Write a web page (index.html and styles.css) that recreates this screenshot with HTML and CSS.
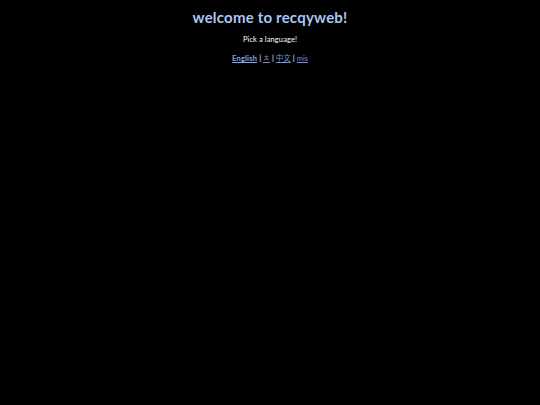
FILE: index.html
```html
<!DOCTYPE html>
<html>
<head>
<meta charset="utf-8">
<link rel="stylesheet" href="styles.css">
</head>
<body>
<main class="page">
  <h1 class="title">welcome to recqyweb!</h1>
  <p class="prompt">Pick a language!</p>
  <nav class="langs">
    <a class="lang lang-current" href="#">English</a>
    <span class="sep">|</span>
    <a class="lang" href="#">ㅊ</a>
    <span class="sep">|</span>
    <a class="lang" href="#">中文</a>
    <span class="sep">|</span>
    <a class="lang" href="#">mis</a>
  </nav>
</main>
</body>
</html>
```

FILE: styles.css
```css
html, body {
  margin: 0;
  padding: 0;
  background: #000;
}
.page {
  display: flex;
  flex-direction: column;
  align-items: center;
  font-family: "Lato", "Noto Sans CJK SC", sans-serif;
  color: #fff;
  padding-top: 8px;
}
.title {
  margin: 0;
  font-size: 15px;
  font-weight: 700;
  color: #a9c6f5;
  letter-spacing: 0.2px;
}
.prompt {
  margin: 9px 0 0;
  font-size: 7.5px;
  letter-spacing: 0.1px;
  color: #fff;
}
.langs {
  margin-top: 8px;
  display: flex;
  gap: 2px;
  align-items: baseline;
  font-size: 7.5px;
}
.lang {
  color: #7390d6;
  text-decoration: underline;
}
.lang-current {
  color: #80a8e6;
  font-weight: 700;
  letter-spacing: 0.2px;
}
.sep {
  color: #fff;
}
```
